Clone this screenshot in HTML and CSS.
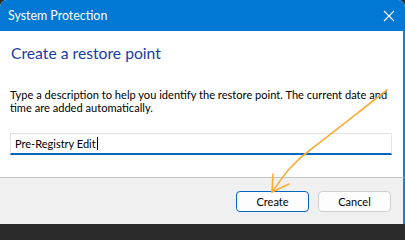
FILE: index.html
```html
<!DOCTYPE html>
<html lang="en">
<head>
<meta charset="utf-8">
<title>System Protection</title>
<link rel="stylesheet" href="styles.css">
</head>
<body>
<div class="window">
  <div class="titlebar">
    <span class="title">System Protection</span>
    <svg class="close" width="12" height="12" viewBox="0 0 12 12" aria-hidden="true">
      <path d="M1 1 L11 11 M11 1 L1 11" stroke="#ffffff" stroke-width="1.1" fill="none"/>
    </svg>
  </div>
  <div class="content">
    <h1 class="heading">Create a restore point</h1>
    <p class="desc">Type a description to help you identify the restore point. The current date and<br>time are added automatically.</p>
    <div class="field"><span class="field-text">Pre-Registry Edit</span><span class="caret"></span></div>
  </div>
  <div class="footer">
    <button class="btn btn-default">Create</button>
    <button class="btn">Cancel</button>
  </div>
</div>
<svg class="annotation" width="405" height="224" viewBox="0 0 405 224" aria-hidden="true">
  <path d="M387 90 C365 107 330 135 310 150 S283 177 272 192" stroke="#f7ad38" stroke-width="1.6" fill="none" stroke-linecap="round"/>
  <path d="M273 174 L272 192 L289 184" stroke="#f7ad38" stroke-width="1.6" fill="none" stroke-linecap="round" stroke-linejoin="round"/>
</svg>
</body>
</html>
```
FILE: styles.css
```css
html, body {
  margin: 0;
  padding: 0;
}
body {
  width: 405px;
  height: 224px;
  background: #2b2b2b;
  overflow: hidden;
  font-family: Lato, "Noto Sans", sans-serif;
}
.window {
  width: 405px;
  height: 224px;
  display: flex;
  flex-direction: column;
  border-radius: 7px 7px 0 0;
  overflow: hidden;
  background: #ffffff;
}
.titlebar {
  height: 31px;
  flex: none;
  background: #0078d4;
  display: flex;
  align-items: center;
  justify-content: space-between;
  padding: 0 10px 0 8px;
}
.title {
  color: #ffffff;
  font-size: 12.4px;
  line-height: 16px;
}
.close {
  display: block;
}
.content {
  height: 146px;
  flex: none;
  box-sizing: border-box;
  padding: 12px 11px 0 10px;
  border-right: 2px solid #1c7dd3;
  background: #ffffff;
}
.heading {
  margin: 0;
  font-weight: normal;
  font-size: 15.7px;
  line-height: 20px;
  color: #1a3aa6;
  padding-left: 1px;
}
.desc {
  margin: 25px 0 0 0;
  font-size: 11.1px;
  line-height: 13px;
  color: #000000;
  white-space: nowrap;
}
.field {
  margin-top: 19px;
  height: 22px;
  box-sizing: border-box;
  border: 1px solid #e3e3e3;
  border-bottom: 2px solid #0067c0;
  display: flex;
  align-items: center;
  padding-left: 4px;
  font-size: 11px;
  color: #000000;
}
.caret {
  width: 1px;
  height: 13px;
  background: #000000;
  margin-left: 1px;
}
.footer {
  flex: 1;
  border-top: 1px solid #c4c4c4;
  border-right: 2px solid #1c7dd3;
  background: #f0f0f0;
  display: flex;
  justify-content: flex-end;
  align-items: flex-start;
  gap: 9px;
  padding: 13px 12px 0 0;
}
.btn {
  width: 73px;
  height: 21px;
  box-sizing: border-box;
  border: 1px solid #d0d0d0;
  border-radius: 4px;
  background: #fdfdfd;
  font-family: Lato, "Noto Sans", sans-serif;
  font-size: 11px;
  color: #000000;
  padding: 0;
}
.btn-default {
  border-color: #0067c0;
}
.annotation {
  position: absolute;
  left: 0;
  top: 0;
  pointer-events: none;
}
```
